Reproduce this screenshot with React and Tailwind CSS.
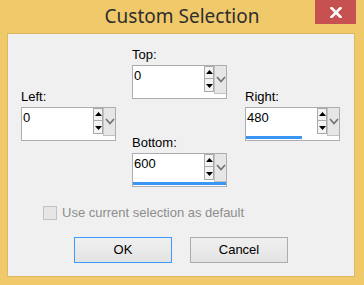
import React from "react";

function SpinBox({ value, fill }) {
  return (
    <div className="w-[95px] h-[34px] border border-[#abadb3] bg-white flex flex-col">
      <div className="flex h-[28px]">
        <div className="flex-1 pl-px pt-[2px] text-[13px] leading-[16px] text-black">{value}</div>
        <div className="w-[10px] h-[26px] flex flex-col">
          <div className="h-[13px] border border-[#a9a9a9] bg-[#f3f3f3] flex items-center justify-center">
            <svg width="7" height="5" viewBox="0 0 7 5"><path d="M0 4 L3.5 0 L7 4 Z" fill="#000" /></svg>
          </div>
          <div className="h-[13px] border border-t-0 border-[#a9a9a9] bg-[#f3f3f3] flex items-center justify-center">
            <svg width="7" height="5" viewBox="0 0 7 5"><path d="M0 1 L7 1 L3.5 5 Z" fill="#000" /></svg>
          </div>
        </div>
        <div className="w-[12px] h-[28px] bg-[#e6e6e6] border-l border-b border-[#c3c3c3] flex items-center justify-center">
          <svg width="10" height="7" viewBox="0 0 10 7"><path d="M1 1 L5 5.5 L9 1" fill="none" stroke="#707070" strokeWidth="1.6" /></svg>
        </div>
      </div>
      <div className="mt-auto mb-px h-[4px]">
        {fill > 0 && <div className="h-full bg-[#3a96f2]" style={{ width: `${fill}%` }} />}
      </div>
    </div>
  );
}

function Field({ label, value, fill }) {
  return (
    <div className="flex flex-col">
      <div className="h-[19px] text-[13px] leading-[18px] text-black">{label}</div>
      <SpinBox value={value} fill={fill} />
    </div>
  );
}

export default function App() {
  return (
    <div
      className="relative w-[364px] h-[285px] bg-[#f0c96a] overflow-hidden"
      style={{ fontFamily: '"Liberation Sans", Arial, sans-serif' }}
    >
      <div className="h-[33px] flex items-center justify-center pb-[1px]">
        <span
          className="text-[19px] leading-[24px] text-[#2e2e2e]"
          style={{ fontFamily: '"Noto Sans", "Open Sans", sans-serif' }}
        >
          Custom Selection
        </span>
      </div>
      <div className="absolute top-0 left-[315px] w-[41px] h-[24px] bg-[#c75050] flex items-center justify-center">
        <svg width="12" height="11" viewBox="0 0 12 11">
          <path d="M1.5 1 L10.5 10 M10.5 1 L1.5 10" stroke="#fff" strokeWidth="2.6" strokeLinecap="square" />
        </svg>
      </div>
      <div className="ml-[7px] w-[348px] h-[244px] bg-[#f0f0f0] border border-[#dcb860] pl-[13px] pt-[12px]">
        <div className="flex">
          <div className="w-[95px] mt-[42px]">
            <Field label="Left:" value="0" fill={0} />
          </div>
          <div className="w-[95px] ml-[16px] flex flex-col">
            <Field label="Top:" value="0" fill={0} />
            <div className="mt-[35px]">
              <Field label="Bottom:" value="600" fill={100} />
            </div>
          </div>
          <div className="w-[95px] ml-[18px] mt-[42px]">
            <Field label="Right:" value="480" fill={60} />
          </div>
        </div>
        <div className="mt-[18px] ml-[22px] flex items-center gap-[5px]">
          <div className="w-[14px] h-[14px] border border-[#c2c2c2] bg-[#e6e6e6]" />
          <span className="text-[13px] leading-[16px] text-[#8d8d8d]">Use current selection as default</span>
        </div>
        <div className="mt-[16px] ml-[53px] flex gap-[18px]">
          <div className="w-[98px] h-[26px] border border-[#3c9bff] bg-gradient-to-b from-[#f0f0f0] to-[#e3e3e3] flex items-center justify-center text-[13px] text-black">
            OK
          </div>
          <div className="w-[98px] h-[26px] border border-[#acacac] bg-gradient-to-b from-[#f0f0f0] to-[#e3e3e3] flex items-center justify-center text-[13px] text-black">
            Cancel
          </div>
        </div>
      </div>
    </div>
  );
}
